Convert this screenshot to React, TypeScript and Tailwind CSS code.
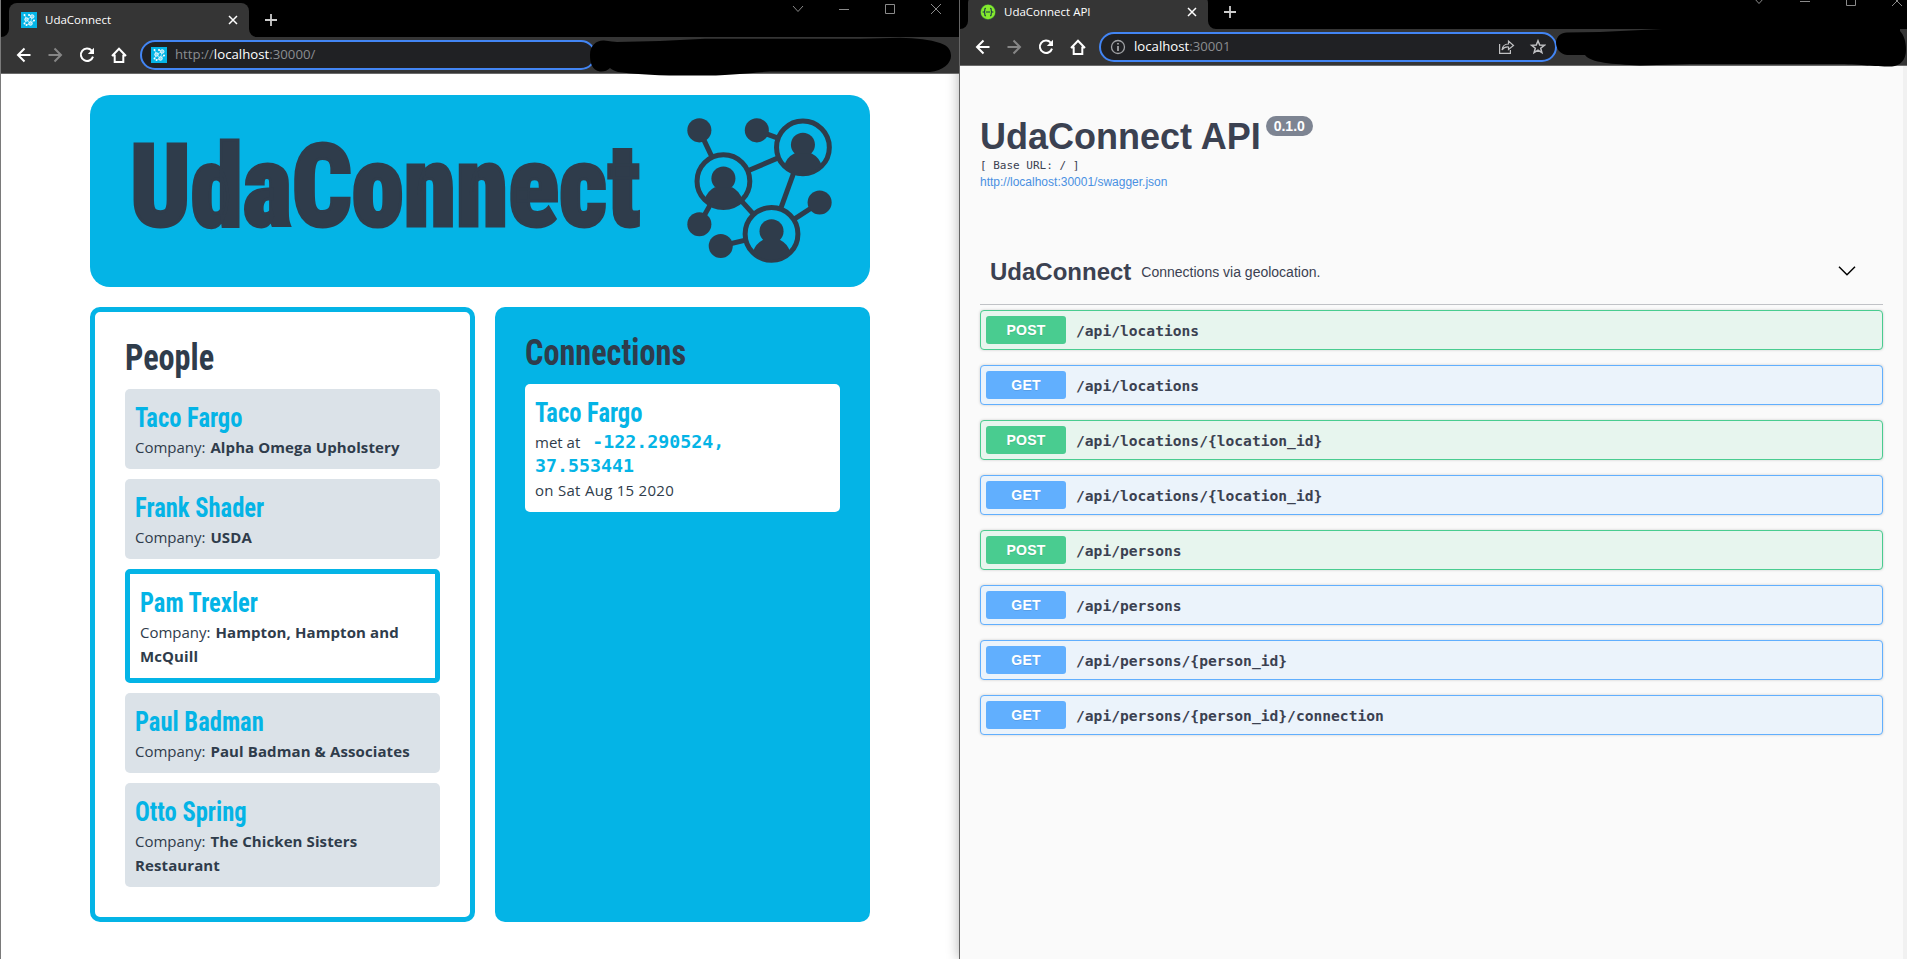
import React from "react";

type Person = { name: string; company: string; active?: boolean };

const people: Person[] = [
  { name: "Taco Fargo", company: "Alpha Omega Upholstery" },
  { name: "Frank Shader", company: "USDA" },
  { name: "Pam Trexler", company: "Hampton, Hampton and McQuill", active: true },
  { name: "Paul Badman", company: "Paul Badman & Associates" },
  { name: "Otto Spring", company: "The Chicken Sisters Restaurant" },
];

const operations: { method: "POST" | "GET"; path: string }[] = [
  { method: "POST", path: "/api/locations" },
  { method: "GET", path: "/api/locations" },
  { method: "POST", path: "/api/locations/{location_id}" },
  { method: "GET", path: "/api/locations/{location_id}" },
  { method: "POST", path: "/api/persons" },
  { method: "GET", path: "/api/persons" },
  { method: "GET", path: "/api/persons/{person_id}" },
  { method: "GET", path: "/api/persons/{person_id}/connection" },
];

const hubs = [
  [729, 288],
  [967, 187],
  [873, 446],
];
const nodes = [
  [657, 136],
  [829, 136],
  [1017, 352],
  [657, 417],
  [721, 482],
];
const links = [
  [657, 136, 729, 288],
  [829, 136, 967, 187],
  [729, 288, 967, 187],
  [967, 187, 873, 446],
  [729, 288, 873, 446],
  [873, 446, 1017, 352],
  [657, 417, 729, 288],
  [721, 482, 873, 446],
];

function NetworkLogo({ className, ink, ground }: { className: string; ink: string; ground: string }) {
  return (
    <svg viewBox="620 99 434 434" className={className}>
      {links.map(([x1, y1, x2, y2]) => (
        <line key={`${x1}-${y1}-${x2}-${y2}`} x1={x1} y1={y1} x2={x2} y2={y2} stroke={ink} strokeWidth="15" />
      ))}
      {nodes.map(([x, y]) => (
        <circle key={`${x}-${y}`} cx={x} cy={y} r="36" fill={ink} />
      ))}
      {hubs.map(([x, y]) => (
        <g key={`${x}-${y}`}>
          <circle cx={x} cy={y} r="79" fill={ground} stroke={ink} strokeWidth="15" />
          <circle cx={x} cy={y - 8} r="36" fill={ink} />
          <path d={`M${x - 56} ${y + 55}A58 58 0 0 1 ${x - 26} ${y + 18}H${x + 26}A58 58 0 0 1 ${x + 56} ${y + 55}A79 79 0 0 1 ${x - 56} ${y + 55}Z`} fill={ink} />
        </g>
      ))}
    </svg>
  );
}

function Favicon() {
  return (
    <svg viewBox="0 0 16 16" className="size-4 shrink-0">
      <path d="M0 0H16V16H0Z" fill="#04b4e6" />
      <path d="M3.500 3L5.500 7.500L11 4.500L9.500 11.500L5.500 7.500L3.500 11.500M8 3L11 4.500M9.500 11.500L13 8.500M5.500 13L9.500 11.500" fill="none" stroke="#c8eefa" strokeWidth="0.700" />
      <g fill="#ffffff">
        <circle cx="3.500" cy="3" r="1" />
        <circle cx="8" cy="3" r="1" />
        <circle cx="13" cy="8.500" r="1" />
        <circle cx="3.500" cy="11.500" r="1" />
        <circle cx="5.500" cy="13" r="1" />
      </g>
      <g fill="#8fdcf3" stroke="#ffffff" strokeWidth="0.800">
        <circle cx="5.500" cy="7.500" r="1.800" />
        <circle cx="11.200" cy="4.500" r="1.800" />
        <circle cx="9.500" cy="11.500" r="1.800" />
      </g>
    </svg>
  );
}

function SwaggerIcon() {
  return (
    <svg viewBox="0 0 16 16" className="size-4 shrink-0">
      <circle cx="8" cy="8" r="7.700" fill="#3f7a3a" />
      <circle cx="8" cy="8" r="7.200" fill="#85ea2d" />
      <path d="M6 4.200C4.600 4.100 4.900 5.200 4.800 6.300C4.800 7.300 4.400 7.800 3.700 8C4.400 8.200 4.800 8.700 4.800 9.700C4.900 10.800 4.600 11.900 6 11.800M10 4.200C11.400 4.100 11.100 5.200 11.200 6.300C11.200 7.300 11.600 7.800 12.300 8C11.600 8.200 11.200 8.700 11.200 9.700C11.100 10.800 11.400 11.900 10 11.800M5.800 8H10.200" fill="none" stroke="#173647" strokeWidth="1.100" />
    </svg>
  );
}

function NavIcons() {
  return (
    <svg viewBox="0 0 112 16" className="h-4 w-28 shrink-0" fill="none" strokeWidth="2">
      <path d="M14.500 8H2M8.500 1.500L2 8L8.500 14.500" stroke="#ffffff" />
      <path d="M32.500 8H45M38.500 1.500L45 8L38.500 14.500" stroke="#868686" />
      <path d="M75.700 3.600A6.200 6.200 0 1 0 77 9.600" stroke="#ffffff" />
      <path d="M78 0.800V7H71.800Z" fill="#ffffff" />
      <path d="M98.700 8V15H107.300V8M96 9L103 1.800L110 9M97 8.500H99.500M106.500 8.500H109" stroke="#ffffff" />
    </svg>
  );
}

function WindowControls({ className }: { className: string }) {
  return (
    <svg viewBox="0 0 150 12" className={className} fill="none" stroke="#8a8a8a" strokeWidth="1">
      <path d="M1 3L6 8.500L11 3M47 6.500H57M93.500 1.500H102.500V10.500H93.500ZM139 1L149 11M149 1L139 11" />
    </svg>
  );
}

function Tab({ icon, title }: { icon: React.ReactNode; title: string }) {
  return (
    <div className="flex items-end">
      <svg viewBox="0 0 8 8" className="size-2">
        <path d="M8 0V8H0A8 8 0 0 0 8 0Z" fill="#353535" />
      </svg>
      <div className="flex h-[34px] w-60 items-center rounded-t-lg bg-[#353535] pr-[11px] pl-3">
        {icon}
        <span className="ml-2 flex-1 text-[11.500px] text-white">{title}</span>
        <svg viewBox="0 0 10 10" className="size-2.5" stroke="#ffffff" strokeWidth="1.500">
          <path d="M1 1L9 9M9 1L1 9" />
        </svg>
      </div>
      <svg viewBox="0 0 8 8" className="size-2">
        <path d="M0 0V8H8A8 8 0 0 1 0 0Z" fill="#353535" />
      </svg>
      <svg viewBox="0 0 12 12" className="mb-[11px] ml-2 size-3" stroke="#cccccc" strokeWidth="1.800">
        <path d="M6 0V12M0 6H12" />
      </svg>
    </div>
  );
}

function Chrome({
  icon,
  title,
  children,
  boxWidth,
  stripHeight,
  controls,
  scribble,
}: {
  icon: React.ReactNode;
  title: string;
  children: React.ReactNode;
  boxWidth: string;
  stripHeight: string;
  controls: string;
  scribble: React.ReactNode;
}) {
  return (
    <header className="relative z-10 shrink-0 [font-family:'Open_Sans',sans-serif]">
      <div className={`flex items-end justify-between bg-black ${stripHeight}`}>
        <Tab icon={icon} title={title} />
        <WindowControls className={controls} />
      </div>
      <div className="flex h-[37px] items-center border-b border-[#6a6a6a] bg-[#353535] pl-[15px]">
        <NavIcons />
        <div className={`ml-3 flex h-[30px] items-center rounded-full border-2 border-[#4285f4] bg-[#202124] pl-[9px] text-[13.200px] text-[#8b8d90] ${boxWidth}`}>{children}</div>
      </div>
      {scribble}
    </header>
  );
}

const display = "inline-block origin-left whitespace-nowrap [font-family:'Roboto_Condensed',Roboto,sans-serif]";

function PersonName({ children }: { children: React.ReactNode }) {
  return (
    <div className="h-9 leading-[39px]">
      <span className={`${display} scale-x-[0.91] text-[27px] font-bold text-[#04b4e6]`}>{children}</span>
    </div>
  );
}

function UdaConnectPage() {
  return (
    <main className="flex flex-1 flex-col gap-5 bg-white px-[89px] pt-[21px] text-[15px] leading-6 text-[#2f3c4b] [font-family:'Open_Sans',sans-serif]">
      <section className="flex h-48 w-[780px] items-center rounded-[20px] bg-[#04b4e6] pr-[38px] pl-[40px]">
        <h1 className="w-[557px] pb-[9px]">
          <span className={`${display} scale-x-[0.914] text-[115px] leading-none font-black [-webkit-text-stroke:3px_#2f3c4b]`}>UdaConnect</span>
        </h1>
        <NetworkLogo className="-mt-px size-[145px] shrink-0" ink="#2f3c4b" ground="#04b4e6" />
      </section>
      <div className="flex h-[615px] gap-5">
        <section className="w-[385px] rounded-[10px] border-5 border-[#04b4e6] px-[30px] pt-[30px]">
          <h2 className="h-[47px] leading-[32px]">
            <span className={`${display} scale-x-[0.896] text-[36px] font-bold`}>People</span>
          </h2>
          <ul className="flex flex-col gap-2.5">
            {people.map((p) => (
              <li key={p.name} className={p.active ? "rounded-[5px] border-5 border-[#04b4e6] bg-white p-2.5" : "rounded-[5px] bg-[#dbe2e8] p-2.5"}>
                <PersonName>{p.name}</PersonName>
                <p>
                  Company: <strong className="ml-px tracking-[0.1px]">{p.company}</strong>
                </p>
              </li>
            ))}
          </ul>
        </section>
        <section className="w-[375px] rounded-[10px] bg-[#04b4e6] p-[30px]">
          <h2 className="h-[47px] leading-[32px]">
            <span className={`${display} scale-x-[0.896] text-[36px] font-bold`}>Connections</span>
          </h2>
          <div className="rounded-[5px] bg-white p-2.5">
            <PersonName>Taco Fargo</PersonName>
            <p>
              met at{" "}
              <span className="ml-2 text-[18.300px] font-bold text-[#04b4e6] [font-family:'DejaVu_Sans_Mono',monospace]">
                -122.290524,
                <br />
                37.553441
              </span>
            </p>
            <p className="tracking-[0.280px]">on Sat Aug 15 2020</p>
          </div>
        </section>
      </div>
    </main>
  );
}

function Operation({ method, path }: { method: "POST" | "GET"; path: string }) {
  const post = method === "POST";
  return (
    <li className={`flex h-10 items-center rounded-[4px] border pl-[5px] shadow-[0_0_3px_rgba(0,0,0,0.19)] ${post ? "border-[#49cc90] bg-[#e7f5ee]" : "border-[#61affe] bg-[#ebf3fb]"}`}>
      <span className={`h-7 w-20 rounded-[3px] text-center text-sm leading-7 font-bold tracking-[0.200px] text-white [text-shadow:0_1px_0_rgba(0,0,0,0.1)] ${post ? "bg-[#49cc90]" : "bg-[#61affe]"}`}>{method}</span>
      <span className="mt-0.5 ml-2.5 text-[14.620px] font-bold [font-family:'DejaVu_Sans_Mono',monospace]">{path}</span>
    </li>
  );
}

function SwaggerPage() {
  return (
    <main className="flex flex-1 bg-[#fafafa] text-[#3b4151] [font-family:'Liberation_Sans',Arial,sans-serif]">
      <div className="flex-1 pt-[50px] pr-5 pl-5">
        <div className="flex h-[42px] items-start">
          <h1 className="text-[36px] leading-[42px] font-bold">UdaConnect API</h1>
          <span className="ml-[5px] h-5 rounded-full bg-[#7d8492] px-2 text-sm leading-5 font-bold text-white">0.1.0</span>
        </div>
        <p className="h-4 text-[11px] leading-4 whitespace-pre [font-family:'DejaVu_Sans_Mono',monospace]">[ Base URL: / ]</p>
        <p className="h-[17px] text-xs leading-4 text-[#4990e2]">http://localhost:30001/swagger.json</p>
        <div className="mt-[49px] flex h-[65px] items-center border-b border-[#3b4151]/30 pr-[27px] pl-2.5">
          <h2 className="text-2xl font-bold">UdaConnect</h2>
          <p className="ml-2.5 flex-1 text-sm">Connections via geolocation.</p>
          <svg viewBox="0 0 18 10" className="mb-[3px] h-2.5 w-[18px]" fill="none" stroke="#000000" strokeWidth="1.500">
            <path d="M1 0.800L9 8.800L17 0.800" />
          </svg>
        </div>
        <ul className="mt-[5px] flex flex-col gap-[15px]">
          {operations.map((o) => (
            <Operation key={o.method + o.path} method={o.method} path={o.path} />
          ))}
        </ul>
      </div>
      <div className="w-1 bg-[#f1f1f1]" />
    </main>
  );
}

export default function App() {
  return (
    <div className="flex h-[959px] w-[1907px] overflow-hidden bg-black">
      <div className="flex w-[959px] flex-col border-l border-[#7a7a7a]">
        <Chrome
          icon={<Favicon />}
          title="UdaConnect"
          boxWidth="w-[456px]"
          stripHeight="h-[37px]"
          controls="mr-[17px] mb-[22px] h-3 w-[150px]"
          scribble={
            <svg viewBox="589 37 364 40" className="absolute top-[37px] left-[588px] h-10 w-[364px]">
              <path d="M590 55C590 45 597 40 604 40.500C610 41 614 42 617 42L660 41L705 38.800H860L900 37.800Q925 38 940 43C949 46 951 51 951 56C951 63 943 71 930 72L860 71.500H770C745 73 735 75.500 700 75.500H680C650 75.500 630 73.500 618 72Q612 70 610 68Q606 72 600 71.500C592 70 590 63 590 55Z" fill="#000000" />
            </svg>
          }
        >
          <Favicon />
          <span className="ml-2 tracking-[0.020px]">
            http://<span className="text-white">localhost</span>:30000/
          </span>
        </Chrome>
        <UdaConnectPage />
      </div>
      <div className="relative flex w-[948px] flex-col border-l border-[#666666] shadow-[0_0_12px_rgba(0,0,0,0.3)]">
        <Chrome
          icon={<SwaggerIcon />}
          title="UdaConnect API"
          boxWidth="w-[458px]"
          stripHeight="h-[29px]"
          controls="mr-[4px] mb-[22px] h-3 w-[150px]"
          scribble={
            <svg viewBox="1555 28 352 40" className="absolute top-7 left-[595px] h-10 w-[352px]">
              <path d="M1556 42C1557 36 1561 32.500 1567 32.500L1600 32L1662 29V28H1900V31C1904 35 1906 42 1906 50C1906 60 1900 66 1892 66.500C1870 66.500 1865 64.500 1840 64H1690L1640 65.500C1612 64 1591 63 1585 55H1567C1560 54 1556 49 1556 42Z" fill="#000000" />
            </svg>
          }
        >
          <svg viewBox="0 0 16 16" className="size-4 shrink-0" fill="none" stroke="#a0a2a5" strokeWidth="1.300">
            <circle cx="8" cy="8" r="6.500" />
            <path d="M8 4V5.600M8 7V12" strokeWidth="1.800" />
          </svg>
          <span className="ml-2 flex-1">
            <span className="text-white">localhost</span>:30001
          </span>
          <svg viewBox="0 0 55 16" className="mr-[9px] h-4 w-[55px] shrink-0" fill="none" stroke="#c0c1c3" strokeWidth="1.200">
            <path d="M8.600 5V14.400H19.400V11M11 11C11.500 7 14 5 17.500 5V2L22.500 6.500L17.500 10.500V8C14.500 7.700 12.500 8.700 11 11Z" />
            <path d="M47 1.800L48.700 6.100L53.300 6.300L49.700 9.200L50.900 13.700L47 11.200L43.100 13.700L44.300 9.200L40.700 6.300L45.300 6.100Z" strokeWidth="1.500" />
          </svg>
        </Chrome>
        <SwaggerPage />
      </div>
    </div>
  );
}
